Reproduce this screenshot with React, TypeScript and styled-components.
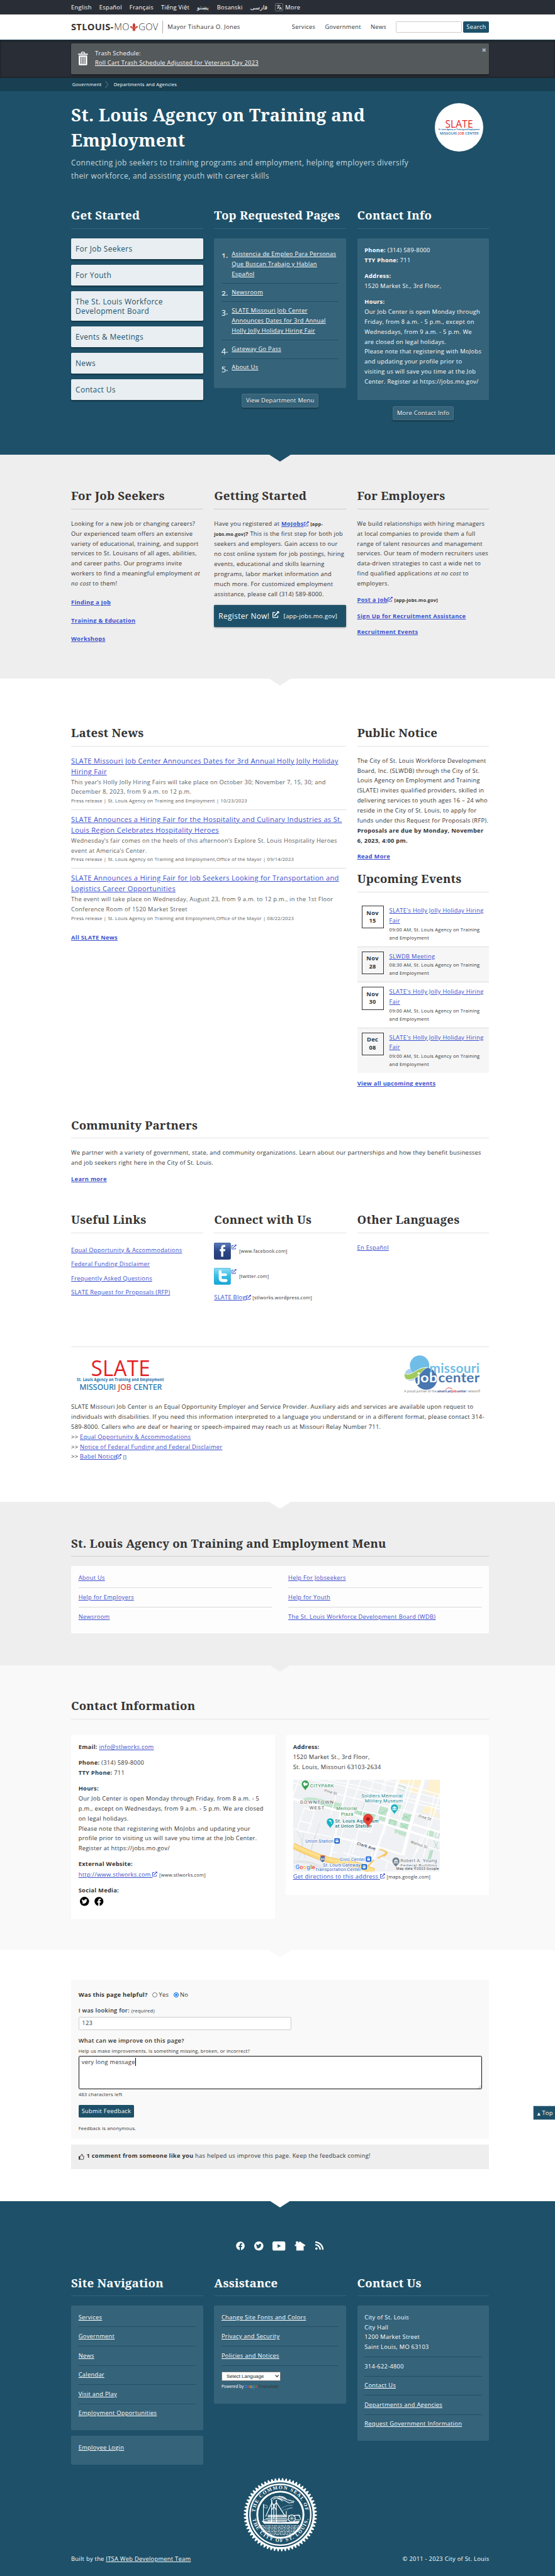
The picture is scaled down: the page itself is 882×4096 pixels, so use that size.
import React from "react";
import styled, { createGlobalStyle, css } from "styled-components";
import { FaExternalLinkAlt, FaTwitter, FaFacebook, FaRss, FaRegThumbsUp } from "react-icons/fa";
import { MdTranslate } from "react-icons/md";

const teal = "#1e5169";
const panelTeal = "#35637a";
const ink = "#333";
const blue = "#3b50ce";
const sans = '"Open Sans", "Noto Sans", "DejaVu Sans", sans-serif';
const serif = '"Noto Serif", "Droid Serif", "DejaVu Serif Condensed", serif';

const Global = createGlobalStyle`
  * { box-sizing: border-box; }
  body { margin: 0; background: #fff; overflow: hidden; }
  div, p, span, a, b { letter-spacing: 0.03em; }
  svg { overflow: visible; }
`;

const Page = styled.div`
  zoom: 0.5828;
  width: 1513px;
  height: 7029px;
  overflow: hidden;
  font: 16px/27.2px ${sans};
  color: ${ink};
`;

const gutter = css`
  padding-left: 194px;
  padding-right: 179px;
`;

const Lines = styled.p<{ $mt?: number; $lh?: number; $bold?: boolean; $color?: string }>`
  margin: ${(p) => p.$mt ?? 0}px 0 0;
  line-height: ${(p) => p.$lh ?? 27.2}px;
  font-weight: ${(p) => (p.$bold ? 700 : 400)};
  color: ${(p) => p.$color ?? "inherit"};
  white-space: pre;
`;

const Link = styled.a<{ $color?: string }>`
  color: ${(p) => p.$color ?? blue};
  text-decoration: underline;
  text-decoration-thickness: 1.5px;
  text-underline-offset: 2px;
`;

const Small = styled.span<{ $size?: number }>`
  font-size: ${(p) => p.$size ?? 12.8}px;
`;

const SemiBold = styled.span`
  font-weight: 600;
`;

/* ---------- top bars ---------- */

const LangBar = styled.div`
  ${gutter}
  height: 40px;
  display: flex;
  align-items: center;
  gap: 20.5px;
  background: #292e36;
  color: #fff;
`;
const LangItem = styled.span<{ $w?: number }>`
  width: ${(p) => (p.$w ? `${p.$w}px` : "auto")};
  white-space: nowrap;
  letter-spacing: ${(p) => (p.$w ? "0" : "0.03em")};
`;
const More = styled.span`
  display: flex;
  align-items: center;
  gap: 5px;
`;
const TranslateBox = styled.span`
  display: flex;
  align-items: center;
  justify-content: center;
  width: 22px;
  height: 23px;
  border: 1px solid #6b6f75;
  border-radius: 3px;
  font-size: 16px;
`;

const Header = styled.header`
  ${gutter}
  height: 69px;
  display: flex;
  align-items: center;
  background: #fff;
  border-bottom: 3px solid #1b465a;
`;
const Mayor = styled.span`
  margin-left: 10px;
  padding-left: 12px;
  height: 35px;
  line-height: 34px;
  border-left: 1px solid #aaa;
  font-size: 16.5px;
`;
const Nav = styled.nav`
  margin-left: auto;
  display: flex;
  gap: 26px;
  margin-right: 26px;
`;
const SearchInput = styled.div`
  width: 180px;
  height: 31px;
  border: 1px solid #ccc;
  border-radius: 3px;
  margin-right: 4px;
`;
const Button = styled.button<{ $h?: number; $mt?: number }>`
  display: block;
  height: ${(p) => p.$h ?? 31}px;
  margin: ${(p) => p.$mt ?? 0}px 0 0;
  padding: 0 8.5px;
  border: 0;
  border-radius: 3px;
  background: ${teal};
  color: #fff;
  font: 16px/31px ${sans};
  letter-spacing: 0.03em;
`;

const AlertArea = styled.div`
  ${gutter}
  padding-top: 10px;
  height: 104px;
  background: #292e36;
  box-shadow: inset 0 2px 5px rgba(0, 0, 0, 0.35), inset 0 -2px 4px rgba(0, 0, 0, 0.25);
`;
const AlertBox = styled.div`
  height: 84px;
  display: flex;
  padding: 12.5px 7px 0 18px;
  background: #54595c;
  border-radius: 3px;
  color: #fff;
  box-shadow: 0 2px 4px rgba(0, 0, 0, 0.35);
`;
const AlertText = styled.div`
  margin-left: 20px;
  flex: 1;
`;
const Close = styled.span`
  margin-top: -8px;
  font-weight: 800;
  font-size: 22px;
  color: #bbb;
  line-height: 27px;
`;

const Crumbs = styled.div`
  ${gutter}
  padding-left: 197px;
  height: 36px;
  display: flex;
  align-items: center;
  background: #183f52;
  color: #fff;
  font-size: 13px;
  & > svg {
    margin: 0 14px 0 10px;
  }
`;

/* ---------- sections ---------- */

const Section = styled.section<{ $h: number; $pt: number; $bg: string; $fg?: string }>`
  ${gutter}
  position: relative;
  height: ${(p) => p.$h}px;
  padding-top: ${(p) => p.$pt}px;
  background: ${(p) => p.$bg};
  color: ${(p) => p.$fg ?? ink};
`;
const Notch = styled.i<{ $c: string }>`
  position: absolute;
  left: 734px;
  top: -0.5px;
  border: 30px solid transparent;
  border-top: 20.5px solid ${(p) => p.$c};
  border-bottom: 0;
`;

const Columns = styled.div<{ $h?: number; $mt?: number }>`
  display: flex;
  gap: 30px;
  margin-top: ${(p) => p.$mt ?? 0}px;
  height: ${(p) => (p.$h ? `${p.$h}px` : "auto")};
  align-items: flex-start;
`;
const Col = styled.div<{ $w?: number }>`
  width: ${(p) => p.$w ?? 360}px;
  flex: none;
`;
const H2 = styled.h2<{ $mb: number; $mt?: number; $rule?: string }>`
  margin: ${(p) => p.$mt ?? 0}px 0 ${(p) => p.$mb}px;
  padding-bottom: 13.6px;
  border-bottom: 1.5px solid ${(p) => p.$rule ?? "#e2e2e2"};
  height: 59.6px;
  font: 700 32px/45px ${serif};
  letter-spacing: 0.011em;
  white-space: nowrap;
`;

/* ---------- hero ---------- */

const HeroHead = styled.div`
  display: flex;
  justify-content: space-between;
  padding-right: 16px;
`;
const H1 = styled.h1`
  margin: 0 0 11.5px;
  font: 700 47.4px/68.6px ${serif};
  letter-spacing: 0.012em;
  white-space: pre;
`;
const Tagline = styled.p`
  margin: 0;
  height: 72px;
  font-size: 20.55px;
  line-height: 36px;
  color: #c7d6dd;
  white-space: pre;
`;
const RoundLogo = styled.div`
  width: 132px;
  height: 132px;
  margin-top: 2px;
  border-radius: 50%;
  background: #fff;
`;
const Card = styled.a`
  display: block;
  padding: 16px 12px;
  margin-bottom: 15px;
  border-radius: 3px;
  background: #e8eef1;
  box-shadow: 0 2px 4px rgba(0, 0, 0, 0.35);
  color: ${teal};
  font-size: 20.4px;
  line-height: 25px;
  white-space: pre;
`;
const Panel = styled.div<{ $h: number; $pt: number; $bg?: string; $mb?: number }>`
  height: ${(p) => p.$h}px;
  padding: ${(p) => p.$pt}px 20px 0;
  margin-bottom: ${(p) => p.$mb ?? 0}px;
  border-radius: 3px;
  background: ${(p) => p.$bg ?? panelTeal};
`;
const TopItem = styled.div`
  display: flex;
  padding: 10.1px 0;
  line-height: 27.5px;
  white-space: pre;
  &:not(:last-child) {
    border-bottom: 1.5px solid #224f64;
  }
  & > b {
    width: 28px;
    font-weight: 400;
    font-size: 22px;
    letter-spacing: 0;
    padding-top: 1px;
    font-feature-settings: "onum";
  }
`;
const PanelButton = styled.a`
  display: block;
  width: fit-content;
  height: 38px;
  margin: 16px auto 0;
  padding: 0 10px;
  border: 1px solid #4b7388;
  border-radius: 3px;
  background: ${panelTeal};
  box-shadow: 0 2px 4px rgba(0, 0, 0, 0.3);
  text-shadow: 0 1px 1px rgba(0, 0, 0, 0.6);
  line-height: 36px;
  color: #fff;
`;
const RegisterButton = styled.a`
  display: flex;
  align-items: center;
  height: 60px;
  margin-top: 15.6px;
  padding: 0 12px;
  border-radius: 3px;
  background: ${teal};
  box-shadow: 0 1px 4px rgba(0, 0, 0, 0.4);
  color: #fff;
  font-size: 20.4px;
  white-space: nowrap;
  & > svg {
    font-size: 18px;
    margin: -8px 12px 0 8px;
  }
`;

/* ---------- news ---------- */

const NewsItem = styled.article`
  padding: 11.9px 0;
  color: #5c5c5c;
  &:not(:last-of-type) {
    border-bottom: 1.5px solid #ddd;
  }
`;
const NewsTitle = styled.div`
  font-size: 19px;
  line-height: 28.9px;
  white-space: pre;
`;
const Meta = styled.div`
  font-size: 13px;
  line-height: 22.1px;
  white-space: pre;
`;
const EventRow = styled.div`
  display: flex;
  padding: 12px 0 12px 12px;
  &:nth-of-type(even) {
    background: #f6f6f6;
  }
  &:not(:last-of-type) {
    border-bottom: 1.5px solid #ddd;
  }
`;
const DateBox = styled.div`
  width: 60px;
  height: 62px;
  margin: 0.5px 15.5px 0 0;
  padding-top: 8px;
  border: 2px solid ${ink};
  text-align: center;
  font-weight: 700;
  line-height: 20.7px;
`;

const LinkStack = styled.div`
  display: flex;
  flex-direction: column;
  gap: 11.5px;
  white-space: nowrap;
`;
const SocialRow = styled.div`
  display: flex;
  height: 46px;
  margin-bottom: 22px;
  line-height: 46px;
  & > svg:nth-of-type(2) {
    margin: 4px 8px 0 1px;
    font-size: 13px;
    color: ${blue};
  }
`;
const LogoRow = styled.div`
  display: flex;
  justify-content: space-between;
  height: 151.4px;
  padding: 15px 20px 0 0;
  border-top: 1.5px solid #e4e4e4;
`;

/* ---------- menu / contact ---------- */

const MenuGrid = styled.div`
  display: grid;
  grid-template-columns: 528px 528px;
  column-gap: 44px;
`;
const MenuItem = styled.div<{ $last?: boolean }>`
  padding: 12.4px 0;
  height: 53px;
  border-bottom: ${(p) => (p.$last ? "0" : "1.5px solid #dcdcdc")};
`;
const ContactIcons = styled.div`
  display: flex;
  gap: 15px;
  margin: 3px 0 0 4px;
`;

/* ---------- feedback ---------- */

const Question = styled.div`
  display: flex;
  align-items: center;
  height: 27.2px;
`;
const Radio = styled.i<{ $on?: boolean }>`
  width: 13.5px;
  height: 13.5px;
  margin: 0 4px 0 13px;
  border-radius: 50%;
  border: 1.5px solid ${(p) => (p.$on ? "#0a73eb" : "#767676")};
  background: ${(p) => (p.$on ? "#0a73eb" : "#fff")};
  box-shadow: inset 0 0 0 2px #fff;
`;
const TextField = styled.div`
  width: 580px;
  height: 35px;
  margin-top: 2px;
  padding-left: 8px;
  border: 1.5px solid #ccc;
  border-radius: 3px;
  background: #fff;
  line-height: 32px;
`;
const TextArea = styled.div`
  position: relative;
  height: 90.5px;
  margin-top: 2.4px;
  padding: 2px 7px;
  border: 2.5px solid #101010;
  border-radius: 3px;
  background: #fff;
  display: flex;
  & > svg {
    position: absolute;
    right: 0;
    bottom: 0;
  }
`;
const Caret = styled.i`
  width: 1.5px;
  height: 22px;
  margin-top: 2px;
  background: #000;
`;
const Comment = styled.div`
  display: flex;
  height: 67px;
  margin-top: 16px;
  padding: 17px 20px 0;
  background: #eee;
  white-space: pre;
  & > svg {
    margin: 8px 6px 0 0;
  }
`;
const TopTab = styled.a`
  position: absolute;
  right: 0;
  top: 423.5px;
  width: 60px;
  height: 40px;
  padding-left: 10px;
  background: ${teal};
  border: 1px solid #b9cad3;
  border-right: 0;
  border-radius: 3px 0 0 3px;
  line-height: 38px;
  color: #fff;
  white-space: nowrap;
`;

/* ---------- footer ---------- */

const SocialBar = styled.div`
  display: flex;
  align-items: center;
  justify-content: center;
  gap: 25px;
  height: 25px;
`;
const FootItem = styled.div`
  padding: 11.75px 0;
  white-space: pre;
  &:not(:last-child) {
    border-bottom: 1.5px solid #224f64;
  }
`;
const Select = styled.div`
  display: flex;
  justify-content: space-between;
  align-items: center;
  width: 162px;
  height: 25px;
  margin-top: 16.5px;
  padding: 0 4px 0 12px;
  border: 1px solid #767676;
  border-radius: 2px;
  background: #fff;
  color: #222;
  font: 13.6px "Liberation Sans", sans-serif;
  letter-spacing: 0;
`;
const Powered = styled.div`
  margin-top: 6px;
  font-size: 11px;
  letter-spacing: 0;
  line-height: 22px;
  white-space: nowrap;
  & > b {
    font: 700 12.5px "Liberation Sans", sans-serif;
    color: #3c4347;
    letter-spacing: 0.2px;
  }
`;
const SealWrap = styled.div`
  height: 201px;
  display: flex;
  justify-content: center;
`;
const Colophon = styled.div`
  display: flex;
  justify-content: space-between;
  margin-top: 7px;
`;

/* ---------- drawings ---------- */

const ExtIcon = styled(FaExternalLinkAlt)`
  width: 13.5px;
  height: 13.5px;
  color: ${blue};
  vertical-align: -1px;
`;

const SiteLogo = () => (
  <svg width="239" height="34" viewBox="0 0 239 34" fontFamily={sans} fontSize="25.5" fill="#333">
    <text x="0" y="26.5" fontWeight="700" textLength="116" lengthAdjust="spacingAndGlyphs">STLOUIS-</text>
    <text x="117" y="26.5" fontWeight="300" textLength="42" lengthAdjust="spacingAndGlyphs">MO</text>
    <text x="184" y="26.5" fontWeight="300" textLength="54" lengthAdjust="spacingAndGlyphs">GOV</text>
    <path
      fill="#c8392b"
      d="M171.500 6c3 3 4 6 3.500 9-.4 2-1.200 3-1.500 4.500h1.500c.5-3.500 2.500-5.500 5-5 2.500.6 2.500 4 .4 4.500-.8-1.300-2-1-2.400.5-.2 1 0 1.500.2 2h-4.200c.4 2.500 1.600 4 3 5-2 .2-2.800-.6-3.300-1.400-.2 1.800-1 3-2.200 4-1.200-1-2-2.200-2.200-4-.5.8-1.300 1.600-3.300 1.400 1.400-1 2.600-2.500 3-5h-4.200c.2-.5.4-1 .2-2-.4-1.500-1.600-1.800-2.400-.5-2.100-.5-2.100-3.900.4-4.500 2.500-.5 4.500 1.500 5 5h1.500c-.3-1.500-1.100-2.500-1.500-4.500-.5-3 .5-6 3.500-9z"
    />
  </svg>
);

const TrashIcon = styled.svg`
  margin-top: 9px;
`;
const Trash = () => (
  <TrashIcon width="27" height="38" viewBox="0 0 27 38">
    <path d="M9.500 6V3.500a2 2 0 0 1 2-2h4a2 2 0 0 1 2 2V6" fill="none" stroke="#fff" strokeWidth="2.500" />
    <rect y="5.500" width="27" height="3" rx="1" fill="#fff" />
    <path d="M2 10.500h23V35a2.500 2.500 0 0 1-2.500 2.500h-18A2.500 2.500 0 0 1 2 35z" fill="#fff" />
    <path d="M7.500 14v20M11.500 14v20M15.500 14v20M19.500 14v20" stroke="#54595c" strokeWidth="2" />
  </TrashIcon>
);

const SlateText = ({ w, h, box }: { w: number; h: number; box: string }) => (
  <svg width={w} height={h} viewBox={box} fontFamily={sans}>
    <text x="54" y="63.500" fontSize="61" fill="#e31e26" textLength="162" lengthAdjust="spacingAndGlyphs">SLATE</text>
    <text x="15.500" y="78" fontSize="12.500" fontWeight="700" fill="#0b6aa6" textLength="238" lengthAdjust="spacingAndGlyphs">St. Louis Agency on Training and Employment</text>
    <text x="23" y="102" fontSize="22" fill="#0b6aa6" textLength="225" lengthAdjust="spacingAndGlyphs" strokeWidth=".4" stroke="#0b6aa6">
      MISSOURI <tspan fill="#e31e26" stroke="#e31e26">JOB</tspan> CENTER
    </text>
  </svg>
);

const JobCenterLogo = () => (
  <svg width="216" height="118" viewBox="0 0 216 118" fontFamily='"Lato", sans-serif'>
    <circle cx="22" cy="60" r="16.500" fill="#a9d0f2" />
    <circle cx="46" cy="34" r="26.500" fill="#70bde7" />
    <circle cx="64" cy="71" r="30" fill="#4776b0" />
    <path d="M4 56c20 12 34-18 64-16-20 6-22 36-56 33-6-1-8-8-8-17z" fill="#a0ca5c" stroke="#fff" strokeWidth="1.500" />
    <g fontWeight="700" fontSize="35">
      <text x="73" y="55" fill="#70bde7" textLength="137" lengthAdjust="spacingAndGlyphs">missouri</text>
      <text x="38" y="81" fill="#fff" textLength="57" lengthAdjust="spacingAndGlyphs">job</text>
      <text x="97" y="81" fill="#4776b0" textLength="113" lengthAdjust="spacingAndGlyphs">center</text>
    </g>
    <text x="4" y="108" fontSize="9.500" fill="#777" textLength="88" lengthAdjust="spacingAndGlyphs">A proud partner of the</text>
    <text x="94" y="108" fontSize="9.500" fontWeight="700" fill="#2b3c86" textLength="80" lengthAdjust="spacingAndGlyphs">
      american<tspan fill="#d8232a">job</tspan>center
    </text>
    <text x="177" y="108" fontSize="9.500" fill="#777" textLength="35" lengthAdjust="spacingAndGlyphs">network®</text>
    <path d="M117 101c5-7 12-7 18-1" fill="none" stroke="#d8232a" strokeWidth="1.500" />
  </svg>
);

const FacebookTile = () => (
  <svg width="46" height="46" viewBox="0 0 46 46">
    <defs>
      <linearGradient id="fbg" x2="0" y2="1">
        <stop offset="0" stopColor="#5b7dbd" />
        <stop offset=".5" stopColor="#2b4687" />
        <stop offset="1" stopColor="#243c78" />
      </linearGradient>
    </defs>
    <rect width="46" height="46" rx="4" fill="#20386f" />
    <rect x="1" y="1" width="44" height="44" rx="3" fill="url(#fbg)" />
    <path d="M19.500 38V23H16v-5.500h3.500v-3.500c0-5 2.500-8 7.500-8h4v5.500h-3c-1.800 0-2.500.8-2.500 2.500v3.500H31l-.7 5.500h-4.800v15z" fill="#fff" />
  </svg>
);

const TwitterTile = () => (
  <svg width="46" height="46" viewBox="0 0 46 46">
    <defs>
      <linearGradient id="twg" x2="0" y2="1">
        <stop offset="0" stopColor="#8edcf5" />
        <stop offset=".5" stopColor="#35bde6" />
        <stop offset="1" stopColor="#18a5d6" />
      </linearGradient>
    </defs>
    <rect width="46" height="46" rx="4" fill="#2ba6cf" />
    <rect x="1" y="1" width="44" height="44" rx="3" fill="url(#twg)" />
    <path d="M17 10v17.500c0 4.500 3 7 7.500 7H33" fill="none" stroke="#fff" strokeWidth="8" strokeLinecap="round" />
    <path d="M17 18.500h15" stroke="#fff" strokeWidth="7" strokeLinecap="round" />
  </svg>
);

const BirdDisc = ({ size, disc, bird }: { size: number; disc: string; bird: string }) => (
  <svg width={size} height={size} viewBox="0 0 26 26">
    <circle cx="13" cy="13" r="13" fill={disc} />
    <FaTwitter x="5" y="5" size={16} color={bird} />
  </svg>
);

const Pin = ({ x, y, c, children }: { x: number; y: number; c: string; children?: React.ReactNode }) => (
  <g transform={`translate(${x} ${y})`}>
    <path d="M0 0C-1.500-7-10-10-10-18.500a10 10 0 0 1 20 0C10-10 1.500-7 0 0z" fill={c} stroke="#fff" strokeWidth=".6" />
    {children}
  </g>
);
const Train = ({ x, y }: { x: number; y: number }) => (
  <g transform={`translate(${x} ${y})`}>
    <rect width="15" height="15" rx="3" fill="#1a67d2" />
    <rect x="3.500" y="3" width="8" height="8" rx="1.500" fill="#fff" />
    <path d="M4.500 4.500h2.300v2.500h-2.300zM8.200 4.500h2.300v2.500h-2.300z" fill="#1a67d2" />
    <path d="M4.500 13l1.500-2M10.500 13l-1.500-2" stroke="#fff" />
  </g>
);

const MapFrame = styled.svg`
  display: block;
  margin-top: 21px;
  overflow: hidden;
`;
const CityMap = () => (
  <MapFrame width="400" height="250" viewBox="0 0 400 250" fontFamily="Roboto, sans-serif">
    <rect width="400" height="250" fill="#eff1f4" />
    <path d="M285 0h70l-3 20-68-14zM315 15l35 8-2 20-30-9zM370 0h30v35l-32-9zM355 75l25-6 20 35-20-8-28-6zM360 22l40 12v12l-42-12z" fill="#fdf1cf" />
    <g fill="#c1e4cd">
      <path d="M28 52q6-6 30-3l80 17-6 18-60-13-42-12z" />
      <path d="M170 79l60 14-6 18-60-12zM236 72l24 6-8 20-24-6zM275 66l24 3-4 16-14-2zM236 98l20 5-4 12-20-6zM262 106l22 6-4 17-22-5zM299 90l26 6-6 20-26-8zM293 116l25 6-4 17-25-7zM368 135l18 3-5 18-18-4z" />
      <path d="M276 134l36 10-3 12-22-8-4-5-4 4-2 0z" />
      <path d="M375 192l7-1-9 28-6-1z" />
    </g>
    <g fill="none" stroke="#6cbf88" strokeWidth=".8">
      <path d="M230 98l30-18M170 80l10 12 46 4M195 64l-12 34M297 94l26 20M325 96l-32 10M291 118l25 18M316 120l-25 12M287 14l18 6-3 10-18-6zM265 108l14 4-4 14-13-4z" />
      <path d="M384 165l10 26M398 165l-16 24M374 192l-6 26M380 194l-6 24M392 142l8 4-6 14-8-4z" />
    </g>
    <g fill="none" stroke="#fff">
      <g strokeWidth="2.500">
        <path d="M0 8l20 6M50 0l75 14 275 66M95 1l85 16 220 54M110 36l290 72M200 0l200 52M250 0l150 40M30 77l28 8M20 112l32 9M0 134l60 14M15 140l90 15M128 157l-20 4M320 166l80 28M240 214l56 26M136 199l44 12 30 8M108 198l12 0M180 136l32 8M335 146l20 6M330 120l70 22" />
        <path d="M15 0l-15 42M30 77l-20 60M58 85l-18 60M185 0l-55 154M220 0l-28 80-30 120M255 0l-20 72-8 24-16 46M290 0l-44 150M318 0l-30 100M330 0l-40 120M385 40l-20 100-30 60M400 40l-30 100-15 70M118 36l-16 60M165 160l-20 60M350 154l-22 60M215 196l-8 50M225 196l-14 50M257 225l-5 20M250 0l-20 60" />
      </g>
      <path d="M151 0l-51 212M285 0l-40 140-35 104" strokeWidth="5" />
      <path d="M355 0l-40 140-16 66" strokeWidth="9" />
      <path d="M0 52l100 26 90 24 210 64" strokeWidth="6" />
      <path d="M110 154l130 32 56 18" strokeWidth="5" />
      <path d="M170 80l65 16 90 26 75 22" strokeWidth="4" />
    </g>
    <g fill="none" stroke="#cdd0d4" strokeWidth="1">
      <path d="M72 118l-22 70M62 150q-14 30-12 45M10 140q16 16 14 50M28 145q-8 40 6 70M0 228q30-10 90 20M0 236q30-6 70 14M0 222q50-6 100 26M10 222q40-4 80 28M24 190q-4 20-14 26" />
    </g>
    <path d="M0 180Q30 195 70 210T150 226Q190 236 220 250" fill="none" stroke="#f3b64a" strokeWidth="16" />
    <path d="M0 180Q30 195 70 210T150 226Q190 236 220 250" fill="none" stroke="#fde08d" strokeWidth="13" />
    <path d="M0 184Q34 200 80 217T180 243" fill="none" stroke="#f3b64a" strokeWidth="1" />
    <path d="M236 190q14 4 18 7l-8 12q10-6 10-12M230 214q14-6 26-16M190 240q16-2 30-22" fill="none" stroke="#f8c866" strokeWidth="4" />
    <path d="M76 209q4-2 9 0 4 8-2 14l-3 2-3-2q-6-6-1-14z" fill="#3f6cb5" />
    <rect x="74" y="206.500" width="13" height="3" fill="#c5504b" />
    <text x="75.500" y="219" fontSize="8" fontWeight="700" fill="#fff">64</text>
    <g fontSize="13" strokeWidth="2.500" paintOrder="stroke" stroke="#fff">
      <text x="46" y="21" fill="#2e8b50" textLength="65">CITYPARK</text>
      <text x="19" y="66" fill="#4f5357" textLength="91">DOWNTOWN</text>
      <text x="44" y="80" fill="#4f5357" textLength="41">WEST</text>
      <text x="117" y="83" fill="#2e8b50" textLength="58">Memorial</text>
      <text x="130" y="97" fill="#2e8b50" textLength="34">Plaza</text>
      <text x="186" y="48" fill="#1a858d" textLength="113">Soldiers Memorial</text>
      <text x="195" y="62" fill="#1a858d" textLength="104">Military Museum</text>
      <text x="114" y="117" fill="#14777f" textLength="119" fontWeight="500">St. Louis Aquarium</text>
      <text x="114" y="131" fill="#14777f" textLength="100" fontWeight="500">at Union Station</text>
      <text x="33" y="171" fill="#3268c0" textLength="77">Union Station</text>
      <text x="127" y="222" fill="#3268c0" textLength="69">Civic Center</text>
      <text x="81" y="236" fill="#3268c0" textLength="103">St. Louis Gateway</text>
      <text x="60" y="248" fill="#3268c0" textLength="125">Transportation Center</text>
      <text x="292" y="224" fill="#5d6f7a" textLength="100">Robert A. Young</text>
      <text x="292" y="238" fill="#5d6f7a" textLength="100">Federal Building</text>
    </g>
    <g fontSize="10.500" fill="#606468" strokeWidth="2" stroke="#fff" paintOrder="stroke">
      <text transform="translate(84 32) rotate(16)">Pine St</text>
      <text transform="translate(341 102) rotate(15)">Pine St</text>
      <text transform="translate(319 172) rotate(19)">Walnut St</text>
      <text transform="translate(173 177) rotate(17)" fontSize="11.500" fontWeight="500" fill="#4a4d50">Clark Ave</text>
    </g>
    <Train x={112} y={159} />
    <Train x={198} y={209} />
    <Train x={186} y={230} />
    <Pin x={33} y={30} c="#34a050"><path d="M-6-21l5-3 2 4 5-2v6l-10 3z" fill="#fff" /></Pin>
    <Pin x={101} y={133} c="#17b1c3"><path d="M-5-22q8-4 8 4l2 7q-3-2-3-6-3-4-7-5z" fill="#fff" /></Pin>
    <Pin x={276} y={95} c="#17b1c3"><path d="M-6-19l6-4 6 4v1H-6zM-5-17h2v4h-2zM3-17h2v4H3zM-2-17h4v4h-4zM-6-12H6v-1.500H-6z" fill="#fff" /></Pin>
    <Pin x={280} y={240} c="#6d7f8b"><path d="M-6-19l6-4 6 4v1H-6zM-5-17h2v4h-2zM3-17h2v4H3zM-1-17h2v4h-2zM-6-12H6v-1.500H-6z" fill="#fff" /></Pin>
    <path d="M204 130c-1.500-10-13-14-13-23.500a13 13 0 0 1 26 0c0 9.500-11.500 13.500-13 23.500z" fill="#ea4335" stroke="#c5221f" strokeWidth=".7" />
    <circle cx="204" cy="107" r="5" fill="#a8191a" />
    <rect x="279" y="236" width="121" height="14" fill="#f3f4f6" fillOpacity=".85" />
    <text x="281" y="246" fontSize="9.500" fill="#333" textLength="116">Map data ©2023 Google</text>
    <text x="6" y="243" fontSize="17" fontWeight="500" stroke="#fff" strokeWidth="2" paintOrder="stroke" textLength="54">
      <tspan fill="#4285f4">G</tspan><tspan fill="#ea4335">o</tspan><tspan fill="#fbbc05">o</tspan><tspan fill="#4285f4">g</tspan><tspan fill="#34a853">l</tspan><tspan fill="#ea4335">e</tspan>
    </text>
  </MapFrame>
);

const TEETH = 62;
const sealEdge = Array.from({ length: TEETH * 4 }, (_, i) => {
  const a = (i / (TEETH * 4)) * Math.PI * 2;
  const r = i % 4 < 2 ? 99.5 : 93;
  return `${(100 + r * Math.cos(a)).toFixed(2)},${(100 + r * Math.sin(a)).toFixed(2)}`;
}).join(" ");
const WAVES = [
  [41, 159, 130], [43, 157, 134], [46, 155, 138], [48, 152, 142], [52, 148, 146], [57, 144, 150], [64, 137, 154],
];

const Seal = () => (
  <svg width="201" height="201" viewBox="0 0 200 200">
    <polygon points={sealEdge} fill="#fff" />
    <circle cx="100" cy="100" r="88" fill={teal} />
    <circle cx="100" cy="100" r="82.500" fill="none" stroke="#fff" strokeWidth="4" />
    <circle cx="100" cy="100" r="62.700" fill="none" stroke="#fff" strokeWidth="5" />
    <path id="sealTop" d="M31.300 93A69 69 0 0 1 168.700 93" fill="none" />
    <path id="sealBottom" d="M24.500 112A77 77 0 0 0 175.500 112" fill="none" />
    <g fontFamily='"Liberation Serif", serif' fontWeight="700" fontSize="13.500" fill="#fff">
      <text textLength="200"><textPath href="#sealTop">THE COMMON SEAL OF</textPath></text>
      <text textLength="212"><textPath href="#sealBottom">THE CITY OF ST. LOUIS.</textPath></text>
    </g>
    <g stroke="#fff" fill="none">
      <path d="M54 118V71M76 120V60M89 120V60M75 62h4M87 62h4M76 88l13-22M89 88l-13-22M82 70v40M60 105l18-40M89 66l24 38M116 104V90" strokeWidth="2" />
      <path d="M74 60q4-8 14-9t20 4 30 9M80 58q10-6 20-2t24 12l12-2M92 56q10 2 14 8M96 50q14 0 20 8" strokeWidth="2.500" strokeDasharray="3 .8" />
      <path d="M100 86q10-12 34-12M104 90q14-8 30-8M118 88q8-8 14-8" strokeWidth="1" strokeDasharray="2 .8" />
      <path d="M66 101h50M66 106h52M54 114h100M60 110h58M120 103l30-2 4 3M150 101l6 12" strokeWidth="1.800" />
      <path d="M50 117q50 8 102 0l-4 7H56z" fill="#fff" />
      <path d="M66 117h52M66 104h52" strokeWidth="5" strokeDasharray="2 1.500" />
      <circle cx="131" cy="110" r="9.500" strokeWidth="2" fill={teal} />
      <path d="M131 100v18M122 110h18M124 103l14 14M138 103l-14 14M56 73l8 2v7l-8-1z" strokeWidth="1" />
      {WAVES.map(([x1, x2, y], i) => (
        <path key={y} d={`M${x1} ${y}H${x2}`} strokeWidth="1.700" strokeDasharray={i % 2 ? "7 2 3 1.500" : "5 1.500 9 2"} strokeDashoffset={i * 3} />
      ))}
    </g>
  </svg>
);

const MiniGoogle = styled.svg`
  vertical-align: -3px;
`;

const news = [
  {
    title: "SLATE Missouri Job Center Announces Dates for 3rd Annual Holly Jolly Holiday\nHiring Fair",
    body: "This year’s Holly Jolly Hiring Fairs will take place on October 30; November 7, 15, 30; and\nDecember 8, 2023, from 9 a.m. to 12 p.m.",
    meta: "Press release | St. Louis Agency on Training and Employment | 10/23/2023",
  },
  {
    title: "SLATE Announces a Hiring Fair for the Hospitality and Culinary Industries as St.\nLouis Region Celebrates Hospitality Heroes",
    body: "Wednesday’s fair comes on the heels of this afternoon’s Explore St. Louis Hospitality Heroes\nevent at America’s Center.",
    meta: "Press release | St. Louis Agency on Training and Employment,Office of the Mayor | 09/14/2023",
  },
  {
    title: "SLATE Announces a Hiring Fair for Job Seekers Looking for Transportation and\nLogistics Career Opportunities",
    body: "The event will take place on Wednesday, August 23, from 9 a.m. to 12 p.m., in the 1st Floor\nConference Room of 1520 Market Street",
    meta: "Press release | St. Louis Agency on Training and Employment,Office of the Mayor | 08/22/2023",
  },
];
const fair = "SLATE's Holly Jolly Holiday Hiring\nFair";
const events = [
  ["Nov", "15", fair, "09:00"],
  ["Nov", "28", "SLWDB Meeting", "08:30"],
  ["Nov", "30", fair, "09:00"],
  ["Dec", "08", fair, "09:00"],
];
const topPages = [
  "Asistencia de Empleo Para Personas\nQue Buscan Trabajo y Hablan\nEspañol",
  "Newsroom",
  "SLATE Missouri Job Center\nAnnounces Dates for 3rd Annual\nHolly Jolly Holiday Hiring Fair",
  "Gateway Go Pass",
  "About Us",
];
const cards = ["For Job Seekers", "For Youth", "The St. Louis Workforce\nDevelopment Board", "Events & Meetings", "News", "Contact Us"];
const menu = ["About Us", "Help For Jobseekers", "Help for Employers", "Help for Youth", "Newsroom", "The St. Louis Workforce Development Board (WDB)"];

export default function App() {
  return (
    <>
      <Global />
      <Page>
        <LangBar>
          <LangItem>English</LangItem>
          <LangItem>Español</LangItem>
          <LangItem>Français</LangItem>
          <LangItem>Tiếng Việt</LangItem>
          <LangItem $w={34}>پښتو</LangItem>
          <LangItem>Bosanski</LangItem>
          <LangItem $w={48}>فارسی</LangItem>
          <More>
            <TranslateBox><MdTranslate /></TranslateBox>More
          </More>
        </LangBar>
        <Header>
          <SiteLogo />
          <Mayor>Mayor Tishaura O. Jones</Mayor>
          <Nav>
            <span>Services</span>
            <span>Government</span>
            <span>News</span>
          </Nav>
          <SearchInput />
          <Button>Search</Button>
        </Header>
        <AlertArea>
          <AlertBox>
            <Trash />
            <AlertText>
              <Lines>Trash Schedule:</Lines>
              <Lines><Link $color="#fff">Roll Cart Trash Schedule Adjusted for Veterans Day 2023</Link></Lines>
            </AlertText>
            <Close>×</Close>
          </AlertBox>
        </AlertArea>
        <Crumbs>
          <span>Government</span>
          <svg width="9" height="19" viewBox="0 0 9 19"><path d="M1 0l7 9.500L1 19" fill="none" stroke="#7f98a5" strokeWidth="1.300" /></svg>
          <span>Departments and Agencies</span>
        </Crumbs>

        <Section $h={992} $pt={30.3} $bg={teal} $fg="#fff">
          <HeroHead>
            <div>
              <H1>{"St. Louis Agency on Training and\nEmployment"}</H1>
              <Tagline>{"Connecting job seekers to training programs and employment, helping employers diversify\ntheir workforce, and assisting youth with career skills"}</Tagline>
            </div>
            <RoundLogo><SlateText w={132} h={132} box="-6 -79 281 281" /></RoundLogo>
          </HeroHead>
          <Columns $mt={65}>
            <Col>
              <H2 $mb={25.5} $rule="#34647b">Get Started</H2>
              {cards.map((c) => <Card key={c}>{c}</Card>)}
            </Col>
            <Col>
              <H2 $mb={25.5} $rule="#34647b">Top Requested Pages</H2>
              <Panel $h={408.5} $pt={19.5}>
                {topPages.map((t, i) => (
                  <TopItem key={t}>
                    <b>{i + 1}.</b>
                    <Link $color="#fff">{t}</Link>
                  </TopItem>
                ))}
              </Panel>
              <PanelButton>View Department Menu</PanelButton>
            </Col>
            <Col>
              <H2 $mb={25.5} $rule="#34647b">Contact Info</H2>
              <Panel $h={442} $pt={19.4}>
                <Lines><b>Phone:</b> (314) 589-8000{"\n"}<b>TTY Phone:</b> 711</Lines>
                <Lines $mt={16}><b>Address:</b>{"\n"}1520 Market St., 3rd Floor,</Lines>
                <Lines $mt={16}>
                  <b>Hours:</b>
                  {"\nOur Job Center is open Monday through\nFriday, from 8 a.m. - 5 p.m., except on\nWednesdays, from 9 a.m. - 5 p.m. We\nare closed on legal holidays.\nPlease note that registering with MoJobs\nand updating your profile prior to\nvisiting us will save you time at the Job\nCenter. Register at https://jobs.mo.gov/"}
                </Lines>
              </Panel>
              <PanelButton>More Contact Info</PanelButton>
            </Col>
          </Columns>
        </Section>

        <Section $h={610.5} $pt={88.8} $bg="#eee">
          <Notch $c={teal} />
          <Columns>
            <Col>
              <H2 $mb={26} $rule="#ccc">For Job Seekers</H2>
              <Lines>
                {"Looking for a new job or changing careers?\nOur experienced team offers an extensive\nvariety of educational, training, and support\nservices to St. Louisans of all ages, abilities,\nand career paths. Our programs invite\nworkers to find a meaningful employment "}
                <i>at</i>{"\n"}<i>no cost</i> to them!
              </Lines>
              <Lines $mt={25} $bold><Link>Finding a Job</Link></Lines>
              <Lines $mt={22.2} $bold><Link>Training &amp; Education</Link></Lines>
              <Lines $mt={22.2} $bold><Link>Workshops</Link></Lines>
            </Col>
            <Col>
              <H2 $mb={26} $rule="#ccc">Getting Started</H2>
              <Lines $lh={27.5}>
                Have you registered at{" "}
                <b><Link>MoJobs</Link><ExtIcon /> <Small>{"[app-\njobs.mo.gov]"}</Small>?</b>
                {" This is the first step for both job\nseekers and employers. Gain access to our\nno cost online system for job postings, hiring\nevents, educational and skills learning\nprograms, labor market information and\nmuch more. For customized employment\nassistance, please call (314) 589-8000."}
              </Lines>
              <RegisterButton>
                Register Now!<FaExternalLinkAlt /><Small $size={16.5}>[app-jobs.mo.gov]</Small>
              </RegisterButton>
            </Col>
            <Col>
              <H2 $mb={26} $rule="#ccc">For Employers</H2>
              <Lines>
                {"We build relationships with hiring managers\nat local companies to provide them a full\nrange of talent resources and management\nservices. Our team of modern recruiters uses\ndata-driven strategies to cast a wide net to\nfind qualified applications "}
                <i>at no cost</i>
                {" to\nemployers."}
              </Lines>
              <Lines $mt={16.6} $bold><Link>Post a Job</Link><ExtIcon /> <Small>[app-jobs.mo.gov]</Small></Lines>
              <Lines $mt={16.4} $bold><Link>Sign Up for Recruitment Assistance</Link></Lines>
              <Lines $mt={16.4} $bold><Link>Recruitment Events</Link></Lines>
            </Col>
          </Columns>
        </Section>

        <Section $h={2246.5} $pt={125.4} $bg="#fff">
          <Notch $c="#eee" />
          <Columns $h={1069.9}>
            <Col $w={750}>
              <H2 $mb={14}>Latest News</H2>
              {news.map((n) => (
                <NewsItem key={n.meta}>
                  <NewsTitle><Link>{n.title}</Link></NewsTitle>
                  <Lines>{n.body}</Lines>
                  <Meta>{n.meta}</Meta>
                </NewsItem>
              ))}
              <Lines $mt={17} $bold><Link>All SLATE News</Link></Lines>
            </Col>
            <Col>
              <H2 $mb={25.6}>Public Notice</H2>
              <Lines>
                {"The City of St. Louis Workforce Development\nBoard, Inc. (SLWDB) through the City of St.\nLouis Agency on Employment and Training\n(SLATE) invites qualified providers, skilled in\ndelivering services to youth ages 16 – 24 who\nreside in the City of St. Louis, to apply for\nfunds under this Request for Proposals (RFP).\n"}
                <b>{"Proposals are due by Monday, November\n6, 2023, 4:00 pm."}</b>
              </Lines>
              <Lines $mt={15.9} $bold><Link>Read More</Link></Lines>
              <H2 $mt={24.7} $mb={24.7}>Upcoming Events</H2>
              {events.map(([m, d, t, h]) => (
                <EventRow key={m + d}>
                  <DateBox>{m}<br />{d}</DateBox>
                  <div>
                    <Lines><Link>{t}</Link></Lines>
                    <Meta>{`${h} AM, St. Louis Agency on Training\nand Employment`}</Meta>
                  </div>
                </EventRow>
              ))}
              <Lines $mt={16} $bold><Link>View all upcoming events</Link></Lines>
            </Col>
          </Columns>
          <Columns $h={258}>
            <Col $w={1140}>
              <H2 $mb={25.5}>Community Partners</H2>
              <Lines>{"We partner with a variety of government, state, and community organizations. Learn about our partnerships and how they benefit businesses\nand job seekers right here in the City of St. Louis."}</Lines>
              <Lines $mt={16.6} $bold><Link>Learn more</Link></Lines>
            </Col>
          </Columns>
          <Columns $h={369.2}>
            <Col>
              <H2 $mb={32.4}>Useful Links</H2>
              <LinkStack>
                <Link>Equal Opportunity &amp; Accommodations</Link>
                <Link>Federal Funding Disclaimer</Link>
                <Link>Frequently Asked Questions</Link>
                <Link>SLATE Request for Proposals (RFP)</Link>
              </LinkStack>
            </Col>
            <Col>
              <H2 $mb={26.6}>Connect with Us</H2>
              <SocialRow><FacebookTile /><FaExternalLinkAlt /><Small>[www.facebook.com]</Small></SocialRow>
              <SocialRow><TwitterTile /><FaExternalLinkAlt /><Small>[twitter.com]</Small></SocialRow>
              <Lines><Link>SLATE Blog</Link><ExtIcon /> <Small>[stlworks.wordpress.com]</Small></Lines>
            </Col>
            <Col>
              <H2 $mb={26.6}>Other Languages</H2>
              <Lines><Link>En Español</Link></Lines>
            </Col>
          </Columns>
          <LogoRow>
            <SlateText w={270} h={110} box="0 0 270 110" />
            <JobCenterLogo />
          </LogoRow>
          <Lines $lh={27.1}>
            {"SLATE Missouri Job Center is an Equal Opportunity Employer and Service Provider. Auxiliary aids and services are available upon request to\nindividuals with disabilities. If you need this information interpreted to a language you understand or in a different format, please contact 314-\n589-8000. Callers who are deaf or hearing or speech-impaired may reach us at Missouri Relay Number 711.\n>> "}
            <Link>Equal Opportunity &amp; Accommodations</Link>{"\n>> "}
            <Link>Notice of Federal Funding and Federal Disclaimer</Link>{"\n>> "}
            <Link>Babel Notice</Link><ExtIcon /> <Small>[]</Small>
          </Lines>
        </Section>

        <Section $h={445} $pt={89.9} $bg="#eee">
          <Notch $c="#fff" />
          <H2 $mb={25.5} $rule="#ccc">St. Louis Agency on Training and Employment Menu</H2>
          <Panel $h={184} $pt={6.5} $bg="#fdfdfd">
            <MenuGrid>
              {menu.map((m, i) => <MenuItem key={m} $last={i > 3}><Link>{m}</Link></MenuItem>)}
            </MenuGrid>
          </Panel>
        </Section>

        <Section $h={778} $pt={88.4} $bg="#f9f9f9">
          <Notch $c="#eee" />
          <H2 $mb={42.4}>Contact Information</H2>
          <Columns>
            <Col $w={555}>
              <Panel $h={501.4} $pt={20} $bg="#fff">
                <Lines><b>Email:</b> <Link>info@stlworks.com</Link></Lines>
                <Lines $mt={15.8}><b>Phone:</b> (314) 589-8000{"\n"}<b>TTY Phone:</b> 711</Lines>
                <Lines $mt={15.8}>
                  <b>Hours:</b>
                  {"\nOur Job Center is open Monday through Friday, from 8 a.m. - 5\np.m., except on Wednesdays, from 9 a.m. - 5 p.m. We are closed\non legal holidays.\nPlease note that registering with MoJobs and updating your\nprofile prior to visiting us will save you time at the Job Center.\nRegister at https://jobs.mo.gov/"}
                </Lines>
                <Lines $mt={15.8} $lh={27.8}>
                  <b>External Website:</b>{"\n"}<Link>http://www.stlworks.com </Link><ExtIcon /> <Small>[www.stlworks.com]</Small>
                </Lines>
                <Lines $mt={15.8} $bold>Social Media:</Lines>
                <ContactIcons>
                  <BirdDisc size={25} disc="#000" bird="#fff" />
                  <FaFacebook size={25} color="#000" />
                </ContactIcons>
              </Panel>
            </Col>
            <Col $w={555}>
              <Panel $h={436.6} $pt={20} $bg="#fff">
                <Lines><b>Address:</b>{"\n1520 Market St., 3rd Floor,\nSt. Louis, Missouri 63103-2634"}</Lines>
                <CityMap />
                <Lines><Link>Get directions to this address </Link><ExtIcon /> <Small>[maps.google.com]</Small></Lines>
              </Panel>
            </Col>
          </Columns>
        </Section>

        <Section $h={684} $pt={81} $bg="#fff">
          <Notch $c="#f9f9f9" />
          <Panel $h={434} $pt={27.7} $bg="#f9f9f9">
            <Question><b>Was this page helpful?</b><Radio />Yes<Radio $on />No</Question>
            <Lines $mt={15.8}><SemiBold>I was looking for:</SemiBold> <Small $size={13}>(required)</Small></Lines>
            <TextField>123</TextField>
            <Lines $mt={16}><SemiBold>What can we improve on this page?</SemiBold></Lines>
            <Lines $mt={3} $lh={22.1}><Small $size={13}>Help us make improvements. Is something missing, broken, or incorrect?</Small></Lines>
            <TextArea>
              very long message<Caret />
              <svg width="10" height="10" viewBox="0 0 10 10"><path d="M1 10l9-9M5.500 10L10 5.500" stroke="#777" strokeWidth="1.200" /></svg>
            </TextArea>
            <Lines $mt={3.2} $lh={22.1}><Small $size={13}>483 characters left</Small></Lines>
            <Button $mt={18} $h={35}>Submit Feedback</Button>
            <Lines $mt={17.8} $lh={22.1}><Small $size={13}>Feedback is anonymous.</Small></Lines>
          </Panel>
          <Comment>
            <FaRegThumbsUp size={16} />
            <b>1 comment from someone like you</b> has helped us improve this page. Keep the feedback coming!
          </Comment>
          <TopTab><Small $size={11}>▲</Small> Top</TopTab>
        </Section>

        <Section as="footer" $h={1024} $pt={110} $bg={teal} $fg="#fff">
          <Notch $c="#fff" />
          <SocialBar>
            <FaFacebook size={24} />
            <BirdDisc size={25} disc="#fff" bird={teal} />
            <svg width="35" height="25" viewBox="0 0 35 25"><rect width="35" height="25" rx="5" fill="#fff" /><path d="M14 7.500l9 5-9 5z" fill={teal} /></svg>
            <svg width="30" height="25" viewBox="0 0 30 25"><path d="M15 0L0 10.500l2.500 3L5 12v13h20V12l2.500 1.500 2.500-3L22 5z" fill="#fff" /><path d="M4 0h6v8l-6-1z" fill="#fff" /></svg>
            <FaRss size={26} />
          </SocialBar>
          <Columns $mt={65.9} $h={555.1}>
            <Col>
              <H2 $mb={24.5} $rule="#34647b">Site Navigation</H2>
              <Panel $h={340} $pt={7.2} $mb={15.8}>
                {["Services", "Government", "News", "Calendar", "Visit and Play", "Employment Opportunities"].map((t) => (
                  <FootItem key={t}><Link $color="#fff">{t}</Link></FootItem>
                ))}
              </Panel>
              <Panel $h={79.2} $pt={7.2}>
                <FootItem><Link $color="#fff">Employee Login</Link></FootItem>
              </Panel>
            </Col>
            <Col>
              <H2 $mb={24.5} $rule="#34647b">Assistance</H2>
              <Panel $h={269} $pt={7.2}>
                {["Change Site Fonts and Colors", "Privacy and Security", "Policies and Notices"].map((t) => (
                  <FootItem key={t}><Link $color="#fff">{t}</Link></FootItem>
                ))}
                <Select>
                  Select Language
                  <svg width="11" height="7" viewBox="0 0 11 7"><path d="M1 1l4.500 4.500L10 1" fill="none" stroke="#222" strokeWidth="2" /></svg>
                </Select>
                <Powered>
                  Powered by{" "}
                  <MiniGoogle width="34" height="13" viewBox="0 0 34 13" fontFamily="Roboto, sans-serif" fontSize="12">
                    <text y="10" textLength="34">
                      <tspan fill="#4285f4">G</tspan><tspan fill="#ea4335">o</tspan><tspan fill="#fbbc05">o</tspan><tspan fill="#4285f4">g</tspan><tspan fill="#34a853">l</tspan><tspan fill="#ea4335">e</tspan>
                    </text>
                  </MiniGoogle>{" "}
                  <b>Translate</b>
                </Powered>
              </Panel>
            </Col>
            <Col>
              <H2 $mb={24.5} $rule="#34647b">Contact Us</H2>
              <Panel $h={370} $pt={7.2}>
                <FootItem>{"City of St. Louis\nCity Hall\n1200 Market Street\nSaint Louis, MO 63103"}</FootItem>
                <FootItem>314-622-4800</FootItem>
                {["Contact Us", "Departments and Agencies", "Request Government Information"].map((t) => (
                  <FootItem key={t}><Link $color="#fff">{t}</Link></FootItem>
                ))}
              </Panel>
            </Col>
          </Columns>
          <SealWrap><Seal /></SealWrap>
          <Colophon>
            <span>Built by the <Link $color="#fff">ITSA Web Development Team</Link></span>
            <span>© 2011 - 2023 City of St. Louis</span>
          </Colophon>
        </Section>
      </Page>
    </>
  );
}
